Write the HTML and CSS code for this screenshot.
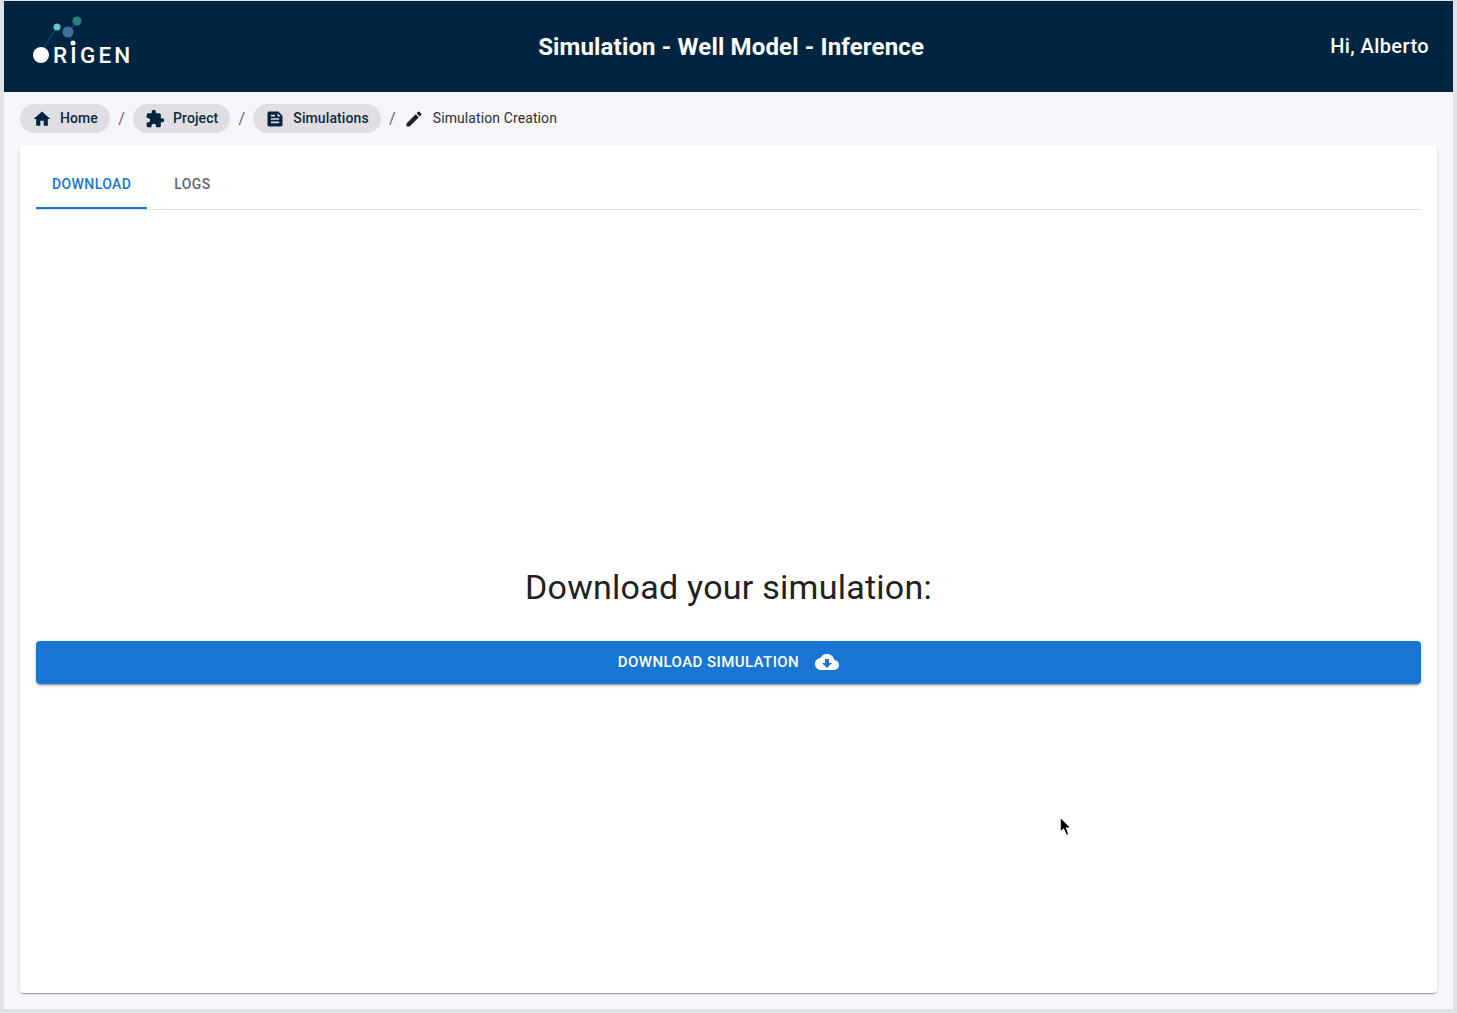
FILE: index.html
```html
<!DOCTYPE html>
<html lang="en">
<head>
  <meta charset="UTF-8">
  <title>Simulation - Well Model - Inference</title>
  <link rel="stylesheet" href="styles.css">
</head>
<body>
  <div class="app">
    <header class="topbar">
      <svg class="logo" width="110" height="60" viewBox="0 0 110 60" aria-label="Origen">
        <path d="M20 31 L33 11 M47 24 L44 16 M44 16 L53 5" stroke="#0b4a78" stroke-width="1.2" fill="none"/>
        <circle cx="33" cy="11" r="3.5" fill="#63c5ce"/>
        <circle cx="44" cy="16" r="5.5" fill="#3a729f"/>
        <circle cx="53" cy="5" r="4.5" fill="#24807f"/>
        <circle cx="49" cy="27" r="2.5" fill="#fff"/>
        <circle cx="17" cy="39" r="8" fill="#fff"/>
        <text class="logo-text" x="29" y="47">RIGEN</text>
      </svg>
      <h1 class="page-title">Simulation - Well Model - Inference</h1>
      <div class="greeting">Hi, Alberto</div>
    </header>

    <main class="content">
      <nav class="crumbs">
        <a class="chip" href="#">
          <svg class="icon" viewBox="0 0 24 24"><path d="M10 20v-6h4v6h5v-8h3L12 3 2 12h3v8z"/></svg>
          <span class="crumb-label">Home</span>
        </a>
        <span class="sep">/</span>
        <a class="chip" href="#">
          <svg class="icon" viewBox="0 0 24 24"><path d="M20.5 11H19V7c0-1.1-.9-2-2-2h-4V3.5C13 2.12 11.88 1 10.5 1S8 2.12 8 3.5V5H4c-1.1 0-1.99.9-1.99 2v3.8H3.5c1.49 0 2.7 1.21 2.7 2.7s-1.21 2.7-2.7 2.7H2V20c0 1.1.9 2 2 2h3.8v-1.5c0-1.49 1.21-2.7 2.7-2.7 1.49 0 2.7 1.21 2.7 2.7V22H17c1.1 0 2-.9 2-2v-4h1.5c1.38 0 2.5-1.12 2.5-2.5S21.88 11 20.5 11z"/></svg>
          <span class="crumb-label">Project</span>
        </a>
        <span class="sep">/</span>
        <a class="chip" href="#">
          <svg class="icon" viewBox="0 0 24 24"><path d="M16 3H5c-1.1 0-2 .9-2 2v14c0 1.1.9 2 2 2h14c1.1 0 2-.9 2-2V8l-5-5zM7 7h5v2H7V7zm10 10H7v-2h10v2zm0-4H7v-2h10v2zm-2-4V5l4 4h-4z"/></svg>
          <span class="crumb-label">Simulations</span>
        </a>
        <span class="sep">/</span>
        <span class="crumb-current">
          <svg class="icon icon-dark" viewBox="0 0 24 24"><path d="M3 17.25V21h3.75L17.81 9.94l-3.75-3.75L3 17.25zM20.71 7.04c.39-.39.39-1.02 0-1.41l-2.34-2.34a.9959.9959 0 0 0-1.41 0l-1.83 1.83 3.75 3.75 1.83-1.83z"/></svg>
          <span class="crumb-label">Simulation Creation</span>
        </span>
      </nav>

      <section class="card">
        <div class="tabs">
          <button class="tab active">Download</button>
          <button class="tab">Logs</button>
        </div>
        <div class="panel">
          <h2 class="panel-title">Download your simulation:</h2>
          <button class="download-btn">
            Download Simulation
            <svg class="btn-icon" viewBox="0 0 24 24"><path d="M19.35 10.04C18.67 6.59 15.64 4 12 4 9.11 4 6.6 5.64 5.35 8.04 2.34 8.36 0 10.91 0 14c0 3.31 2.69 6 6 6h13c2.76 0 5-2.24 5-5 0-2.64-2.05-4.78-4.65-4.96zM17 13l-5 5-5-5h3V9h4v4h3z"/></svg>
          </button>
        </div>
      </section>
    </main>
  </div>

  <svg class="cursor" width="15" height="23" viewBox="0 0 13 20"><path d="M1 1 L1 14 L4 11.5 L6.5 17 L8.5 16 L6.5 10.5 L10.5 10.5 Z" fill="#000" stroke="#fff" stroke-width="1"/></svg>
</body>
</html>
```

FILE: styles.css
```css
html, body {
  margin: 0;
  height: 100%;
}
body {
  font-family: Roboto, sans-serif;
  background-color: #dfe3e8;
  color: #212121;
}
.app {
  box-sizing: border-box;
  height: 1013px;
  padding: 1px 4px 4px;
  display: flex;
  flex-direction: column;
}
.topbar {
  height: 91px;
  flex: none;
  background-color: #012540;
  color: white;
  display: flex;
  align-items: center;
  justify-content: space-between;
  padding: 0 24px 0 20px;
}
.logo {
  display: block;
  margin-top: -2px;
}
.logo-text {
  font-family: Roboto, sans-serif;
  font-size: 22.5px;
  font-weight: 500;
  letter-spacing: 3.2px;
  fill: white;
}
.page-title {
  margin: 2px 0 0;
  font-size: 24px;
  font-weight: 700;
  line-height: 1.2;
  letter-spacing: 0.15px;
  position: relative;
  left: -1px;
}
.greeting {
  margin-top: -2px;
  font-size: 20px;
  font-weight: 500;
  letter-spacing: 0.4px;
}
.content {
  flex: 1;
  background-color: #f6f5fa;
  padding: 12px 16px 16px;
  display: flex;
  flex-direction: column;
}
.crumbs {
  display: flex;
  align-items: center;
  height: 29px;
  font-size: 14px;
  letter-spacing: 0.1px;
  color: #0d2a42;
}
.chip {
  display: flex;
  align-items: center;
  gap: 8px;
  height: 29px;
  padding: 0 12px;
  border-radius: 15px;
  background-color: #e0dee3;
  color: #0d2a42;
  font-weight: 500;
  text-decoration: none;
}
.crumb-label {
  padding-bottom: 2px;
}
.sep {
  margin: 0 8px;
  width: 7px;
  text-align: center;
  color: #666;
  font-size: 16px;
}
.crumb-current {
  display: flex;
  align-items: center;
  gap: 9px;
  color: #2b2f36;
}
.icon {
  width: 20px;
  height: 20px;
  fill: #012540;
}
.icon-dark {
  fill: #212121;
}
.card {
  flex: 1;
  margin-top: 12px;
  padding: 16px;
  background-color: white;
  border-radius: 4px;
  box-shadow: 0 2px 1px -1px rgba(0,0,0,0.2), 0 1px 1px 0 rgba(0,0,0,0.14), 0 1px 3px 0 rgba(0,0,0,0.12);
  display: flex;
  flex-direction: column;
}
.tabs {
  display: flex;
  gap: 11px;
  border-bottom: 1px solid #e0e0e0;
}
.tab {
  height: 48px;
  padding: 0 16px 2px;
  border: none;
  background: none;
  font-family: inherit;
  font-size: 14px;
  font-weight: 500;
  letter-spacing: 0.4px;
  text-transform: uppercase;
  color: #666;
}
.tab.active {
  color: #1976d2;
  box-shadow: inset 0 -2px 0 #1976d2;
}
.panel {
  padding-top: 356px;
}
.panel-title {
  margin: 0 0 33px;
  font-size: 34px;
  font-weight: 400;
  line-height: 42px;
  letter-spacing: 0.25px;
  text-align: center;
}
.download-btn {
  width: 100%;
  height: 43px;
  padding: 0 0 2px;
  display: flex;
  align-items: center;
  justify-content: center;
  gap: 16px;
  border: none;
  border-radius: 4px;
  background-color: #1976d2;
  color: white;
  font-family: inherit;
  font-size: 15px;
  font-weight: 500;
  letter-spacing: 0.43px;
  text-transform: uppercase;
  box-shadow: 0 3px 1px -2px rgba(0,0,0,0.2), 0 2px 2px 0 rgba(0,0,0,0.14), 0 1px 5px 0 rgba(0,0,0,0.12);
}
.btn-icon {
  width: 24px;
  height: 24px;
  fill: white;
}
.cursor {
  position: absolute;
  left: 1059px;
  top: 816px;
}
```
